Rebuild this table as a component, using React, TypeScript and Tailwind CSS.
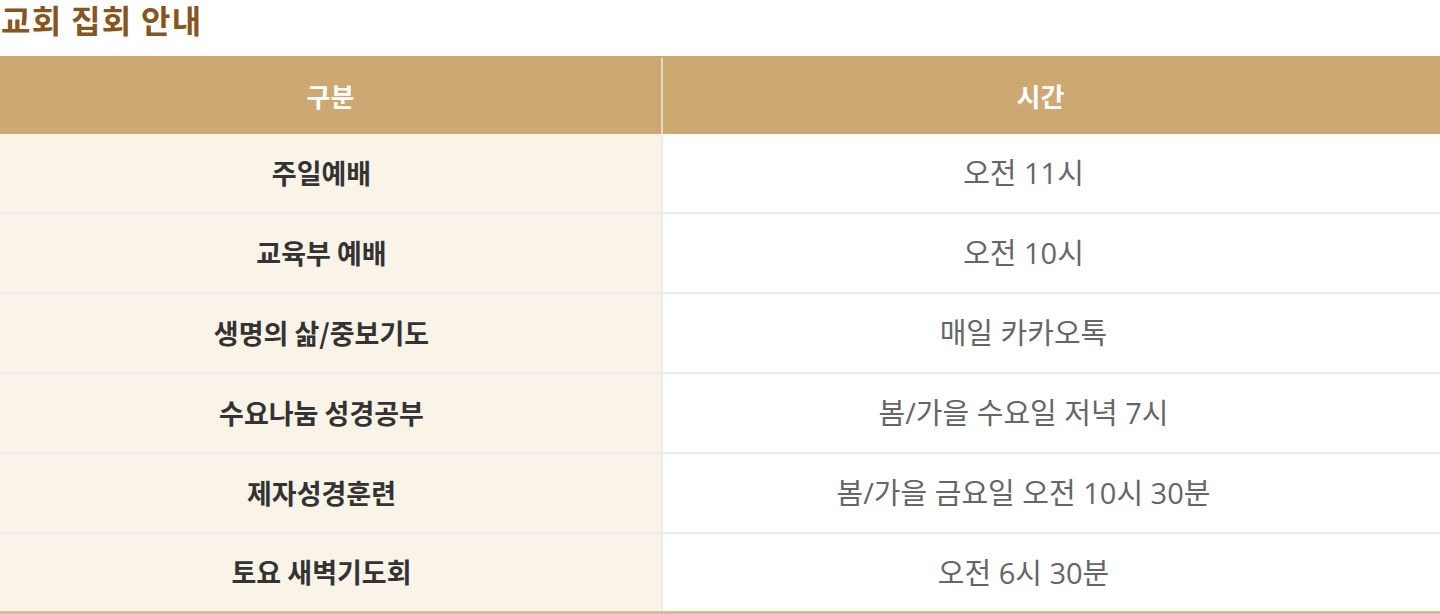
const ROWS = [
  { label: "주일예배", time: "오전 11시" },
  { label: "교육부 예배", time: "오전 10시" },
  { label: "생명의 삶/중보기도", time: "매일 카카오톡" },
  { label: "수요나눔 성경공부", time: "봄/가을 수요일 저녁 7시" },
  { label: "제자성경훈련", time: "봄/가을 금요일 오전 10시 30분" },
  { label: "토요 새벽기도회", time: "오전 6시 30분" },
]

export default function App() {
  return (
    <div className="w-[1440px] h-[614px] bg-white overflow-hidden font-['Open_Sans','Noto_Sans_CJK_KR',sans-serif]">
      <div className="h-[56px]">
        <h1 className="pl-[1px] text-[32px] leading-[38px] font-bold text-[#87561f] tracking-[1.3px] font-['Noto_Sans_CJK_KR',sans-serif]">
          교회 집회 안내
        </h1>
      </div>

      <div className="w-full">
        {/* header */}
        <div className="grid grid-cols-[663px_1fr] h-[78px] bg-[#cea872] text-white text-[26px] font-bold font-['Noto_Sans_CJK_KR',sans-serif]">
          <div className="flex items-center justify-center border-r-2 border-[#e6dac6] mt-[2px] pb-[2px]">
            구분
          </div>
          <div className="flex items-center justify-center pr-[22px]">시간</div>
        </div>

        {ROWS.map((row, i) => (
          <div
            key={row.label}
            className={`grid grid-cols-[663px_1fr] h-[80px] border-b-2 ${
              i === ROWS.length - 1 ? "border-b-[3px] border-[#d8bf92]" : "border-[#ebebeb]"
            }`}
          >
            <div className="flex items-center justify-center pr-[18px] bg-[#f9f3e8] border-r-2 border-[#ebebeb] text-[27px] font-bold text-[#333] font-['Noto_Sans_CJK_KR',sans-serif]">
              {row.label}
            </div>
            <div className="flex items-center justify-center pr-[56px] text-[29px] text-[#666]">
              {row.time}
            </div>
          </div>
        ))}
      </div>
    </div>
  )
}
